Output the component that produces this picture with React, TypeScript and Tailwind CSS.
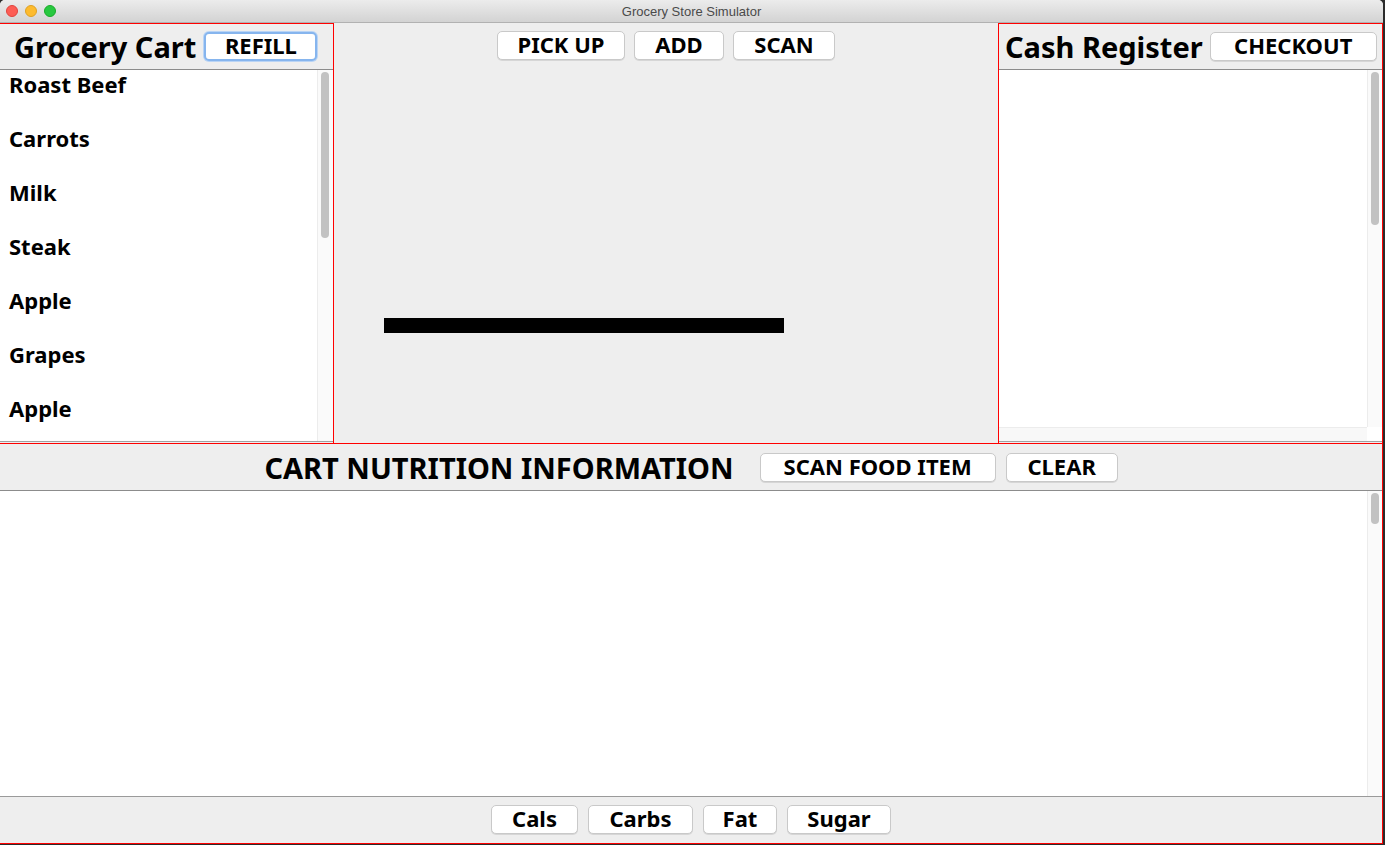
import React from "react";

const cartItems = ["Roast Beef", "Carrots", "Milk", "Steak", "Apple", "Grapes", "Apple"];

// Swing-on-mac style push button
const Btn = ({ label, w, focused = false }: { label: string; w: string; focused?: boolean }) => (
  <button
    className={`${w} h-[29px] shrink-0 bg-white rounded-[5px] text-[22px] leading-none font-bold text-black flex items-center justify-center pb-[3px] ${
      focused
        ? "border-2 border-[#86b5ee] shadow-[0_0_0_1px_#b9d4f5]"
        : "border border-[#c9c9c9] shadow-[0_1px_0_#d6d6d6]"
    }`}
  >
    {label}
  </button>
);

const VScroll = ({ thumb }: { thumb: string }) => (
  <div className="w-[15px] shrink-0 bg-[#fafafa] border-l border-[#ececec] pt-[2px] flex justify-center">
    <div className={`w-[8px] ${thumb} rounded-full bg-[#c2c2c2]`}></div>
  </div>
);

export default function App() {
  return (
    <div className="w-[1385px] h-[845px] bg-[#2b2b2b] overflow-hidden" style={{ fontFamily: '"Noto Sans", "Open Sans", sans-serif' }}>
      <div className="w-[1383px] h-[844px] bg-[#eeeeee] rounded-t-[5px] flex flex-col overflow-hidden">
        {/* Title bar */}
        <div className="relative h-[23px] shrink-0 bg-gradient-to-b from-[#ececec] to-[#d3d3d3] border-b border-[#b1b1b1] flex items-center justify-center pt-[2px]">
          <div className="absolute left-[6px] top-[5px] flex gap-[7px]">
            <span className="w-[12px] h-[12px] rounded-full bg-[#fd5d55] border border-[#e0443e]"></span>
            <span className="w-[12px] h-[12px] rounded-full bg-[#fdbb2e] border border-[#dea123]"></span>
            <span className="w-[12px] h-[12px] rounded-full bg-[#28c840] border border-[#1aab29]"></span>
          </div>
          <span className="text-[13px] text-[#4a4a4a]" style={{ fontFamily: '"Liberation Sans", Arial, sans-serif' }}>
            Grocery Store Simulator
          </span>
        </div>

        {/* Top section */}
        <div className="h-[420px] shrink-0 flex">
          {/* Grocery Cart */}
          <div className="w-[334px] shrink-0 border-t border-r border-[#ff0000] flex flex-col">
            <div className="h-[46px] shrink-0 flex items-center pl-[14px] gap-[8px] border-b border-[#8c8c8c]">
              <span className="text-[29px] font-bold text-black leading-none">Grocery Cart</span>
              <Btn label="REFILL" w="w-[113px]" focused />
            </div>
            <div className="flex-1 flex bg-white border-b border-[#a0a0a0] mb-[1px] overflow-hidden">
              <div className="flex-1">
                {cartItems.map((item, i) => (
                  <div key={i} className="h-[54px] pl-[9px] text-[22px] font-bold text-black leading-[28px]">
                    {item}
                  </div>
                ))}
              </div>
              <div className="flex pr-[1px] bg-[#fafafa]">
                <VScroll thumb="h-[166px]" />
              </div>
            </div>
          </div>

          {/* Center / scanner */}
          <div className="flex-1 flex flex-col border-t border-transparent">
            <div className="flex justify-center gap-[9px] pt-[7px]">
              <Btn label="PICK UP" w="w-[128px]" />
              <Btn label="ADD" w="w-[90px]" />
              <Btn label="SCAN" w="w-[102px]" />
            </div>
            <div className="ml-[50px] mt-[258px] w-[400px] h-[15px] bg-black"></div>
          </div>

          {/* Cash Register */}
          <div className="w-[385px] shrink-0 border-t border-l border-r border-[#ff0000] flex flex-col">
            <div className="h-[46px] shrink-0 flex items-center pl-[6px] gap-[7px] border-b border-[#8c8c8c]">
              <span className="text-[29px] font-bold text-black leading-none">Cash Register</span>
              <Btn label="CHECKOUT" w="w-[167px]" />
            </div>
            <div className="flex-1 flex flex-col border-b border-[#a0a0a0] mb-[1px]">
              <div className="flex-1 flex">
                <div className="flex-1 bg-white"></div>
                <VScroll thumb="h-[153px]" />
              </div>
              <div className="h-[14px] shrink-0 flex">
                <div className="flex-1 bg-[#f8f8f8] border-t border-[#ececec]"></div>
                <div className="w-[15px] bg-white"></div>
              </div>
            </div>
          </div>
        </div>

        {/* Nutrition section */}
        <div className="flex-1 flex flex-col border-t border-r border-b border-[#ff0000]">
          <div className="h-[47px] shrink-0 flex items-center justify-center gap-[10px] border-b border-[#8c8c8c]">
            <span className="text-[29px] font-bold text-black leading-none mr-[16px]">CART NUTRITION INFORMATION</span>
            <Btn label="SCAN FOOD ITEM" w="w-[236px]" />
            <Btn label="CLEAR" w="w-[112px]" />
          </div>
          <div className="h-[306px] shrink-0 flex bg-white border-b border-[#9a9a9a]">
            <div className="flex-1"></div>
            <VScroll thumb="h-[31px]" />
          </div>
          <div className="flex-1 flex justify-center gap-[10px] pt-[8px]">
            <Btn label="Cals" w="w-[87px]" />
            <Btn label="Carbs" w="w-[105px]" />
            <Btn label="Fat" w="w-[74px]" />
            <Btn label="Sugar" w="w-[104px]" />
          </div>
        </div>
      </div>
    </div>
  );
}
